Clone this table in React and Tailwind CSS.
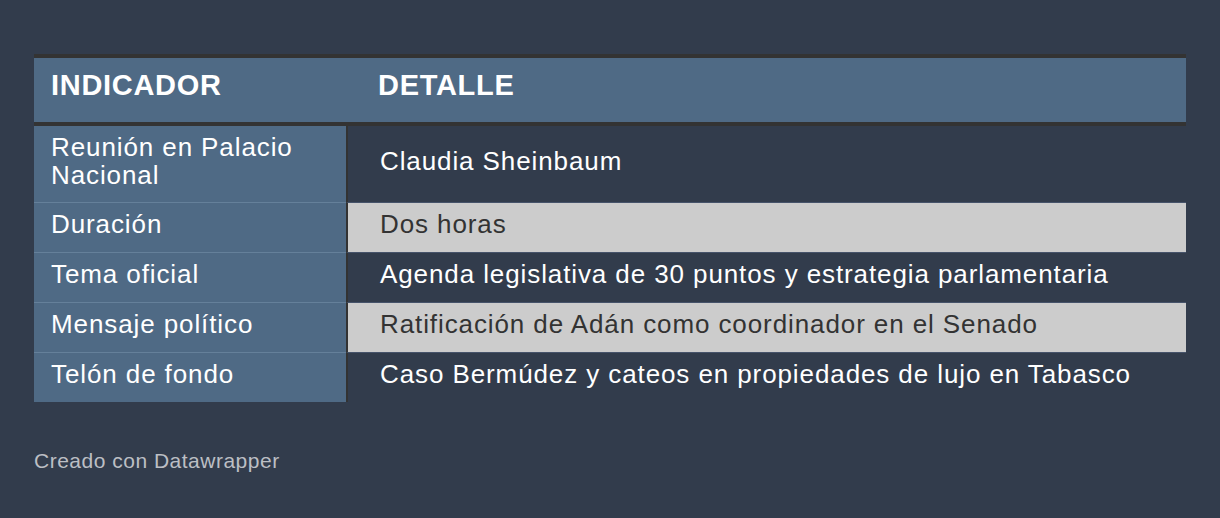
import React from 'react';

const rows = [
    { label: "Reunión en Palacio Nacional", value: "Claudia Sheinbaum", light: false },
    { label: "Duración", value: "Dos horas", light: true },
    { label: "Tema oficial", value: "Agenda legislativa de 30 puntos y estrategia parlamentaria", light: false },
    { label: "Mensaje político", value: "Ratificación de Adán como coordinador en el Senado", light: true },
    { label: "Telón de fondo", value: "Caso Bermúdez y cateos en propiedades de lujo en Tabasco", light: false },
];

const App = () => {
    return (
        <div className="min-h-screen bg-[#323c4c] px-[34px] pt-[54px] font-['Liberation_Sans',Arial,sans-serif]">
            {/* tabla */}
            <div className="w-full">
                <div className="flex h-[72px] border-y-4 border-[#333333] bg-[#4f6a85] pt-[11px] text-[29px] font-bold leading-[32px] tracking-[0.7px] text-white">
                    <div className="w-[314px] pl-[17px]">INDICADOR</div>
                    <div className="pl-[30px]">DETALLE</div>
                </div>

                {rows.map((row, i) => (
                    <div key={row.label} className="flex text-[26px] leading-[28px] tracking-[0.9px]">
                        <div className={`w-[312px] shrink-0 bg-[#4f6a85] pl-[17px] pr-[12px] pt-[7px] text-white ${i === 0 ? "pb-[13px]" : "border-t border-[#65809a] pb-[14px]"}`}>
                            {row.label}
                        </div>
                        <div className={`flex flex-1 items-center border-l-2 border-[#333333] pl-[32px] pt-[7px] ${i === 0 ? "pb-[13px]" : "border-t border-t-[#46536a] pb-[14px]"} ${row.light ? "bg-[#cccccc] text-[#333333]" : "text-white"}`}>
                            {row.value}
                        </div>
                    </div>
                ))}
            </div>

            <p className="mt-[43px] text-[21px] tracking-[0.5px] text-[#bcbfc4]">Creado con Datawrapper</p>
        </div>
    );
};

export default App;
